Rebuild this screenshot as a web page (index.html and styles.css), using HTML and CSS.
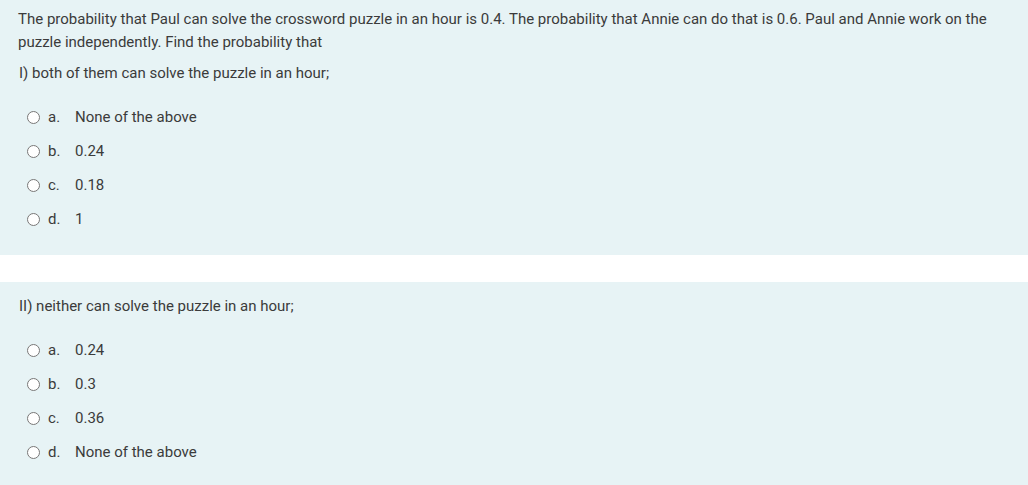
FILE: index.html
```html
<!DOCTYPE html>
<html>
<head>
<meta charset="utf-8">
<link rel="stylesheet" href="styles.css">
</head>
<body>
<div class="block first">
  <p class="qtext">The probability that Paul can solve the crossword puzzle in an hour is 0.4. The probability that Annie can do that is 0.6. Paul and Annie work on the puzzle independently. Find the probability that</p>
  <p class="sub">I) both of them can solve the puzzle in an hour;</p>
  <div class="answers">
    <label class="opt"><input type="radio" name="q1"><span class="letter">a.</span><span>None of the above</span></label>
    <label class="opt"><input type="radio" name="q1"><span class="letter">b.</span><span>0.24</span></label>
    <label class="opt"><input type="radio" name="q1"><span class="letter">c.</span><span>0.18</span></label>
    <label class="opt"><input type="radio" name="q1"><span class="letter">d.</span><span>1</span></label>
  </div>
</div>
<div class="block second">
  <p class="sub">II) neither can solve the puzzle in an hour;</p>
  <div class="answers">
    <label class="opt"><input type="radio" name="q2"><span class="letter">a.</span><span>0.24</span></label>
    <label class="opt"><input type="radio" name="q2"><span class="letter">b.</span><span>0.3</span></label>
    <label class="opt"><input type="radio" name="q2"><span class="letter">c.</span><span>0.36</span></label>
    <label class="opt"><input type="radio" name="q2"><span class="letter">d.</span><span>None of the above</span></label>
  </div>
</div>
</body>
</html>
```

FILE: styles.css
```css
html, body {
  margin: 0;
  padding: 0;
  background: #ffffff;
}
body {
  font-family: Roboto, "Liberation Sans", Arial, sans-serif;
  font-size: 15px;
  line-height: 1.5;
  color: #3b3b3b;
}
.block {
  background: #e7f3f5;
  padding: 8px 18px 20px 18px;
}
.block.first {
  height: 227px;
  margin-bottom: 27px;
}
.block.second {
  padding-top: 13px;
  height: 190px;
}
.qtext {
  margin: 0 0 9px 0;
}
.sub {
  margin: 0 0 16px 0;
  padding-left: 1px;
}
.answers {
  display: flex;
  flex-direction: column;
  padding-left: 9px;
}
.opt {
  display: flex;
  align-items: center;
  height: 34px;
}
.opt input {
  margin: 0 8px 0 0;
  width: 13px;
  height: 13px;
}
.letter {
  display: inline-block;
  width: 27px;
}
```
